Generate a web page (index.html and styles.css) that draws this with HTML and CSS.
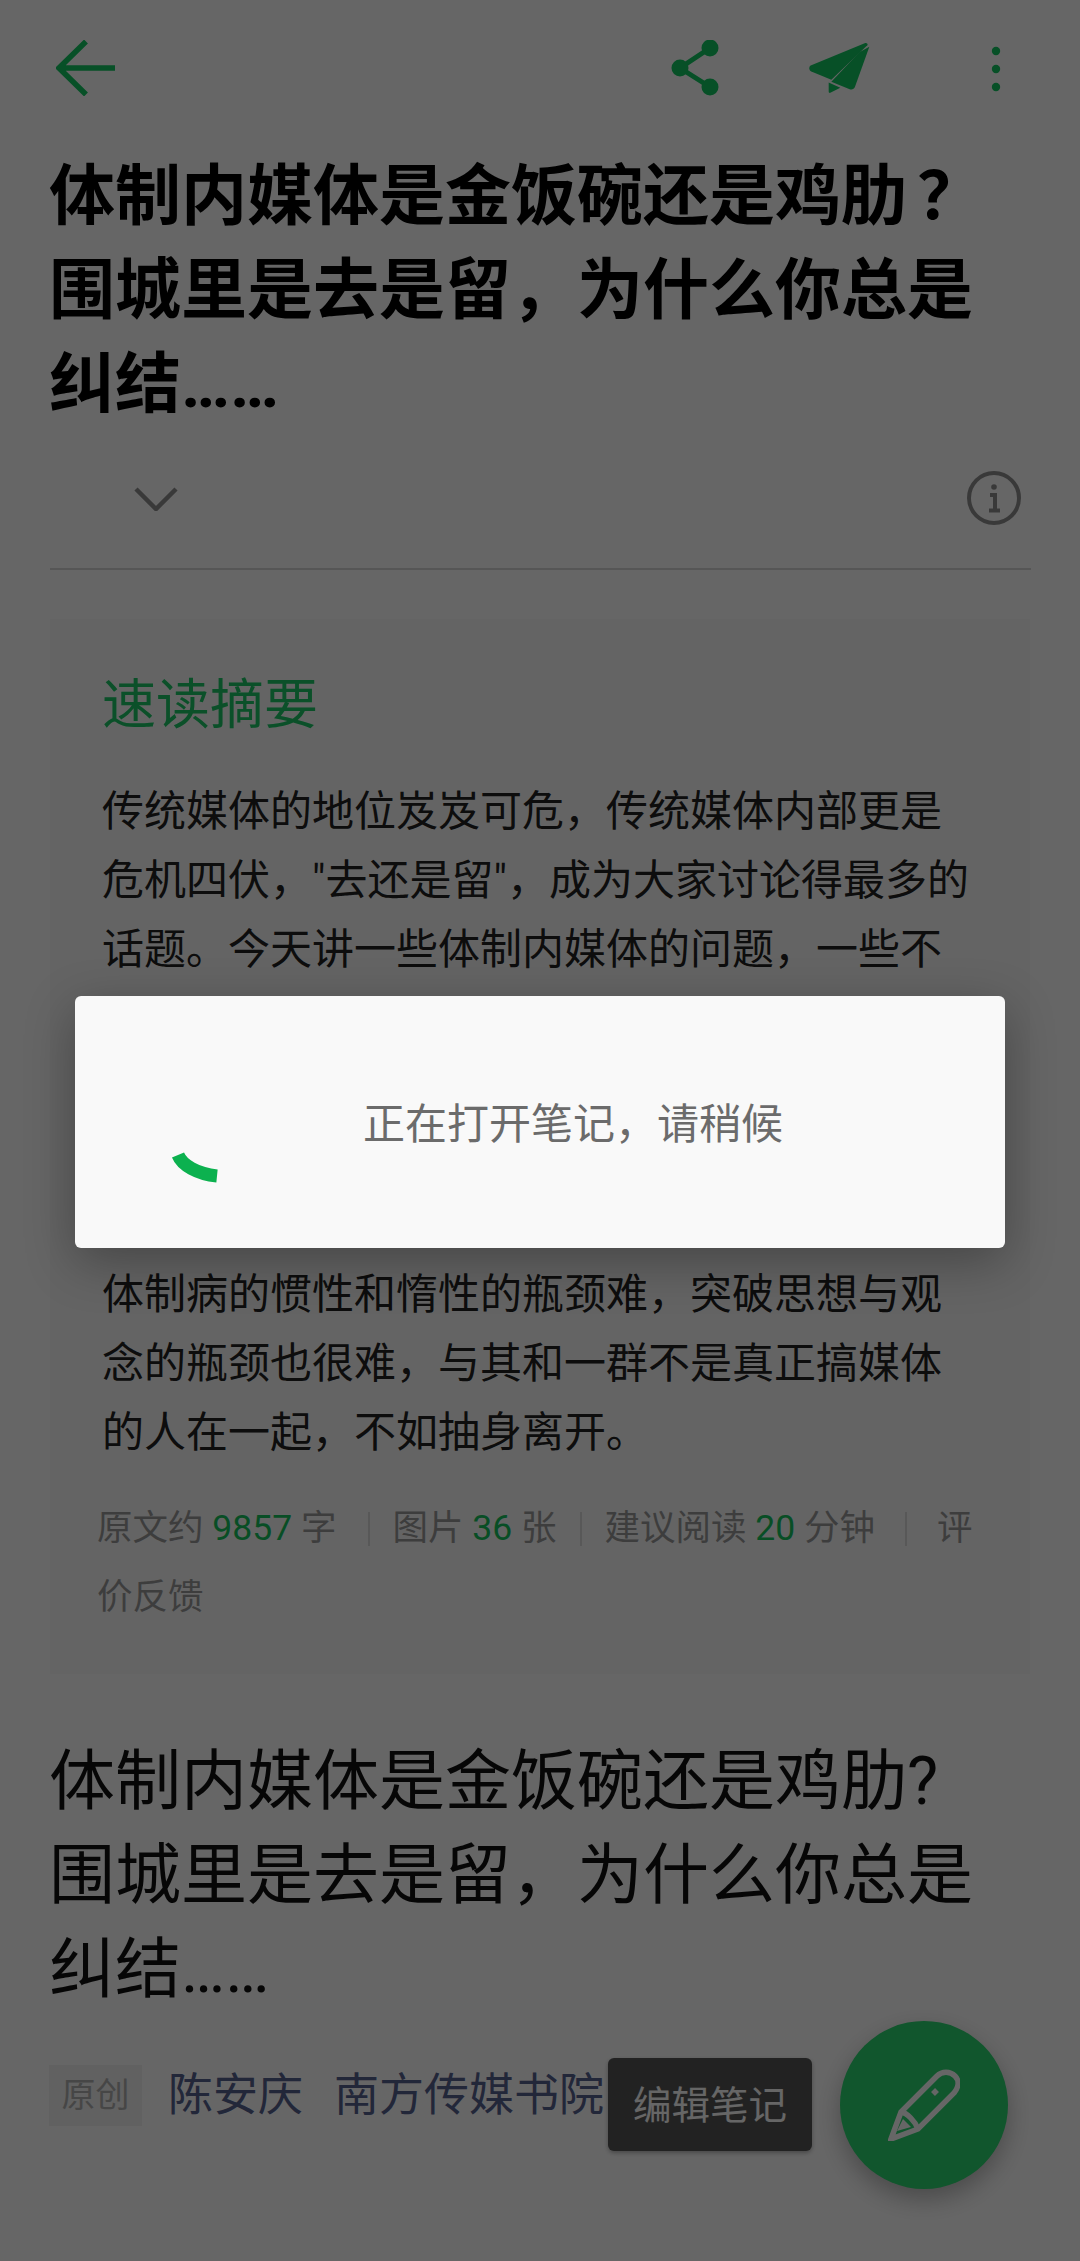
FILE: index.html
```html
<!DOCTYPE html>
<html lang="zh-CN">
<head>
<meta charset="utf-8">
<title>笔记</title>
<link rel="stylesheet" href="styles.css">
</head>
<body>
<div class="page">
  <header class="toolbar">
    <svg class="ic-back" viewBox="0 0 60 56"><path d="M30 1.5 3 28l27 26.5M3 28h56"/></svg>
    <svg class="ic-share" viewBox="0 0 48 56"><path d="M39 8 9 28l30 19"/><circle cx="39" cy="8" r="8.5"/><circle cx="9" cy="28" r="8.5"/><circle cx="39" cy="47" r="8.5"/></svg>
    <svg class="ic-send" viewBox="0 0 240 170"><path d="M14 76 176 9c6-2 11 2 8 6L76 119 16 94c-8-4-8-14-2-18Z"/><path d="M160 36 190 20 147 140c-3 7-9 9-16 7L76 125Z"/><path d="M68 127l35 16-30 15c-3 1-5-1-5-4Z"/></svg>
    <svg class="ic-more" viewBox="0 0 10 46"><circle cx="5" cy="5" r="4.2"/><circle cx="5" cy="23" r="4.2"/><circle cx="5" cy="41" r="4.2"/></svg>
  </header>

  <h1 class="title-bold">体制内媒体是金饭碗还是鸡肋<span class="qmark">？</span>围城里是去是留，为什么你总是纠结……</h1>

  <div class="info-row">
    <svg class="ic-chevron" viewBox="0 0 44 24"><path d="M2 2l20 20L42 2"/></svg>
    <svg class="ic-info" viewBox="0 0 54 54"><circle cx="27" cy="27" r="25"/><circle class="dot" cx="27" cy="16" r="2.8"/><path d="M23 24h5v15M22 39.500h11"/></svg>
  </div>

  <section class="card">
    <h2 class="card-title">速读摘要</h2>
    <p class="summary">传统媒体的地位岌岌可危，传统媒体内部更是危机四伏，"去还是留"，成为大家讨论得最多的话题。今天讲一些体制内媒体的问题，一些不</p>
    <div class="summary-gap"></div>
    <p class="summary">体制病的惯性和惰性的瓶颈难，突破思想与观念的瓶颈也很难，与其和一群不是真正搞媒体的人在一起，不如抽身离开。</p>
    <p class="meta">原文约 <b>9857</b> 字<i class="sep sep-a"></i>图片 <b>36</b> 张<i class="sep sep-b"></i>建议阅读 <b>20</b> 分钟<i class="sep sep-c"></i>评价反馈</p>
  </section>

  <h2 class="title-plain">体制内媒体是金饭碗还是鸡肋?<br>围城里是去是留，为什么你总是纠结……</h2>

  <div class="byline">
    <span class="tag">原创</span>
    <span class="author">陈安庆</span>
    <span class="author org">南方传媒书院</span>
  </div>

  <div class="tooltip">编辑笔记</div>
  <button class="fab" type="button" aria-label="编辑笔记">
    <svg viewBox="0 0 72 72"><path d="M3 70 13 43 49 7c5-5 13-5 18 0s3 12-1 17L30 60Z"/><path d="M13 43c6 1 14 9 17 17"/><path class="tip" d="M9 62l6-12 8 8Z"/><path d="M45 25l4-4"/></svg>
  </button>
</div>

<div class="scrim"></div>

<div class="dialog">
  <svg class="spinner" viewBox="0 0 48 32"><path d="M7 3c4 10 19 19 39 21"/></svg>
  <span class="dialog-text">正在打开笔记，请稍候</span>
</div>
</body>
</html>
```

FILE: styles.css
```css
* { box-sizing: border-box; margin: 0; padding: 0; }
html, body { width: 1080px; height: 2261px; overflow: hidden; background: #fff; }
body { font-family: Roboto, "Noto Sans CJK SC", sans-serif; color: #000; position: relative; }

.page { position: relative; height: 2261px; padding: 0 50px; display: flex; flex-direction: column; }

.toolbar { height: 150px; display: flex; align-items: flex-start; padding-top: 40px; flex: none; }
.toolbar svg { display: block; }
.ic-back { width: 60px; height: 56px; margin-left: 6px; fill: none; stroke: #12c862; stroke-width: 5.500; }
.ic-share { width: 48px; height: 56px; margin-left: 555px; fill: #12c862; }
.ic-share path { fill: none; stroke: #12c862; stroke-width: 5; }
.ic-send { width: 80px; height: 57px; margin-left: 87px; fill: #12c862; }
.ic-more { width: 10px; height: 46px; margin-left: 105px; margin-top: 6px; fill: #12c862; }

.title-bold { font-size: 66px; line-height: 94px; font-weight: 700; margin-left: -1px; }
.qmark { margin-left: 10px; margin-right: -10px; }

.info-row { height: 138px; position: relative; display: flex; justify-content: space-between; align-items: flex-start; border-bottom: 2px solid #d8d8d8; padding: 55px 10px 0 84px; flex: none; margin-right: -1px; }
.ic-chevron { width: 44px; height: 24px; fill: none; stroke: #8f8f8f; stroke-width: 4.500; }
.ic-info { width: 54px; height: 54px; margin-top: -16px; fill: none; stroke: #909090; stroke-width: 4; }
.ic-info .dot { fill: #909090; stroke: none; }

.card { margin-top: 49px; height: 1055px; background: #fbfbfb; padding: 53px 52px 0; flex: none; }
.card-title { font-size: 54px; line-height: 68px; font-weight: 400; color: #1cc866; margin-bottom: 37px; }
.summary { font-size: 42px; line-height: 69px; color: #222; }
.summary-gap { height: 276px; }
.meta { font-size: 35.500px; line-height: 69px; color: #9a9a9a; margin: 27px -10px 0 -5px; }
.meta b { font-weight: 400; color: #16c25e; }
.sep { display: inline-block; width: 2px; height: 34px; background: #dcdcdc; vertical-align: -6px; }
.sep-a { margin: 0 22px 0 32px; }
.sep-b { margin: 0 22px 0 24px; }
.sep-c { margin: 0 30px 0 30px; }

.title-plain { font-size: 66px; line-height: 94px; font-weight: 400; margin-top: 61px; color: #111; margin-left: -1px; }

.byline { display: flex; align-items: center; margin-top: 48px; margin-left: -1px; }
.tag { width: 93px; height: 61px; background: #f3f3f3; color: #b0b0b0; font-size: 34px; line-height: 61px; text-align: center; }
.author { font-size: 45px; line-height: 61px; color: #56618f; margin-left: 26px; white-space: nowrap; }
.author.org { margin-left: 31px; }

.tooltip { position: absolute; left: 608px; top: 2058px; width: 204px; height: 93px; border-radius: 6px; background: #555; color: #fff; font-size: 38.500px; line-height: 96px; text-align: center; box-shadow: 0 2px 4px rgba(0,0,0,.3); }
.fab { position: absolute; left: 840px; top: 2021px; width: 168px; height: 168px; border: 0; border-radius: 50%; background: #2bd670; box-shadow: 0 10px 24px rgba(0,0,0,.28); display: flex; align-items: center; justify-content: center; }
.fab svg { width: 72px; height: 72px; fill: none; stroke: #fff; stroke-width: 5.500; }
.fab .tip { fill: #fff; stroke: none; }

.scrim { position: absolute; inset: 0; background: rgba(0,0,0,.6); }

.dialog { position: absolute; left: 75px; top: 996px; width: 930px; height: 252px; background: #f9f9f9; border-radius: 6px; box-shadow: 0 14px 50px rgba(0,0,0,.3); }
.dialog-text { position: absolute; left: 288px; top: 99px; font-size: 42px; line-height: 60px; color: #6b6b6b; white-space: nowrap; }
.spinner { position: absolute; left: 96px; top: 156px; width: 48px; height: 32px; fill: none; stroke: #0cb14f; stroke-width: 13; }
```
